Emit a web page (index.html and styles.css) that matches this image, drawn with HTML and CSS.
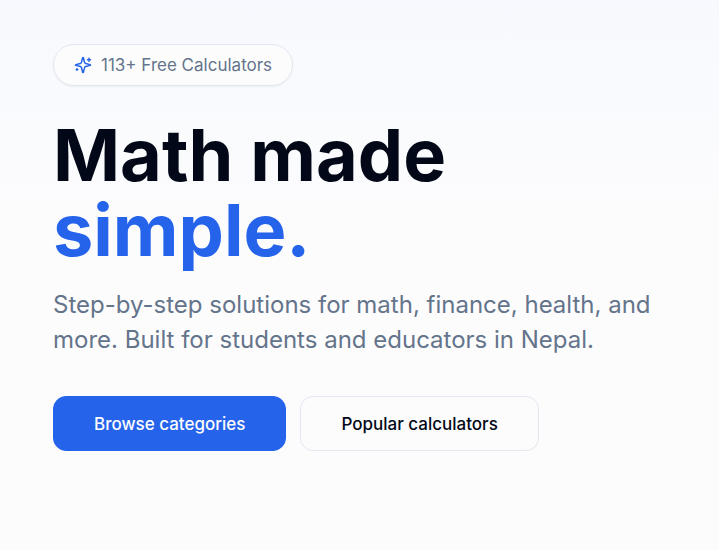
FILE: index.html
```html
<!doctype html>
<html lang="en">
  <head>
    <meta charset="utf-8">
    <meta name="viewport" content="width=device-width, initial-scale=1">
    <title>Math made simple</title>
    <link rel="stylesheet" href="styles.css">
  </head>
  <body>
    <section class="hero">
      <p class="badge">
        <svg class="badge-icon" viewBox="0 0 24 24" aria-hidden="true">
          <path d="M9.937 15.5A2 2 0 0 0 8.5 14.063l-6.135-1.582a.5.5 0 0 1 0-.962L8.5 9.936A2 2 0 0 0 9.937 8.5l1.582-6.135a.5.5 0 0 1 .963 0L14.063 8.5A2 2 0 0 0 15.5 9.937l6.135 1.581a.5.5 0 0 1 0 .964L15.5 14.063a2 2 0 0 0-1.437 1.437l-1.582 6.135a.5.5 0 0 1-.963 0z"/>
          <path d="M20 3v4M22 5h-4M4 17v2M5 18H3"/>
        </svg>
        <span>113+ Free Calculators</span>
      </p>
      <h1 class="title">Math made <span class="accent">simple.</span></h1>
      <p class="lead">Step-by-step solutions for math, finance, health, and more. Built for students and educators in Nepal.</p>
      <div class="actions">
        <button type="button" class="btn primary">Browse categories</button>
        <button type="button" class="btn outline">Popular calculators</button>
      </div>
    </section>
  </body>
</html>
```

FILE: styles.css
```css
body {
  margin: 0;
  min-height: 100vh;
  background: linear-gradient(#f7f9fe, #fcfcfd 220px);
  font-family: Inter, "Liberation Sans", sans-serif;
  color: #020817;
}

.hero {
  padding: 44px 53px;
}

.badge {
  display: flex;
  align-items: center;
  gap: 9px;
  box-sizing: border-box;
  width: fit-content;
  height: 42px;
  margin: 0 0 31px;
  padding: 0 20px;
  border: 1px solid #e2e8f0;
  border-radius: 21px;
  background: #fcfcfd;
  box-shadow: 0 1px 2px rgba(0, 0, 0, 0.05);
  font-size: 17px;
  line-height: 24px;
  color: #64748b;
}

.badge-icon {
  width: 18px;
  height: 18px;
  fill: none;
  stroke: #2563eb;
  stroke-width: 2;
  stroke-linecap: round;
  stroke-linejoin: round;
}

.title {
  margin: 0 0 20px;
  font-size: 72px;
  line-height: 75px;
  font-weight: 700;
}

.accent {
  display: block;
  color: #2563eb;
}

.lead {
  margin: 0 0 39px;
  font-size: 24px;
  line-height: 35px;
  color: #64748b;
}

.actions {
  display: flex;
  flex-wrap: wrap;
  gap: 14px;
}

.btn {
  height: 55px;
  padding: 0 40px;
  border: 1px solid #e2e8f0;
  border-radius: 13px;
  font: 500 17px Inter, "Liberation Sans", sans-serif;
}

.primary {
  border-color: #2563eb;
  background: #2563eb;
  color: #fcfcfd;
}

.outline {
  background: #fcfcfd;
  color: #020817;
}
```
